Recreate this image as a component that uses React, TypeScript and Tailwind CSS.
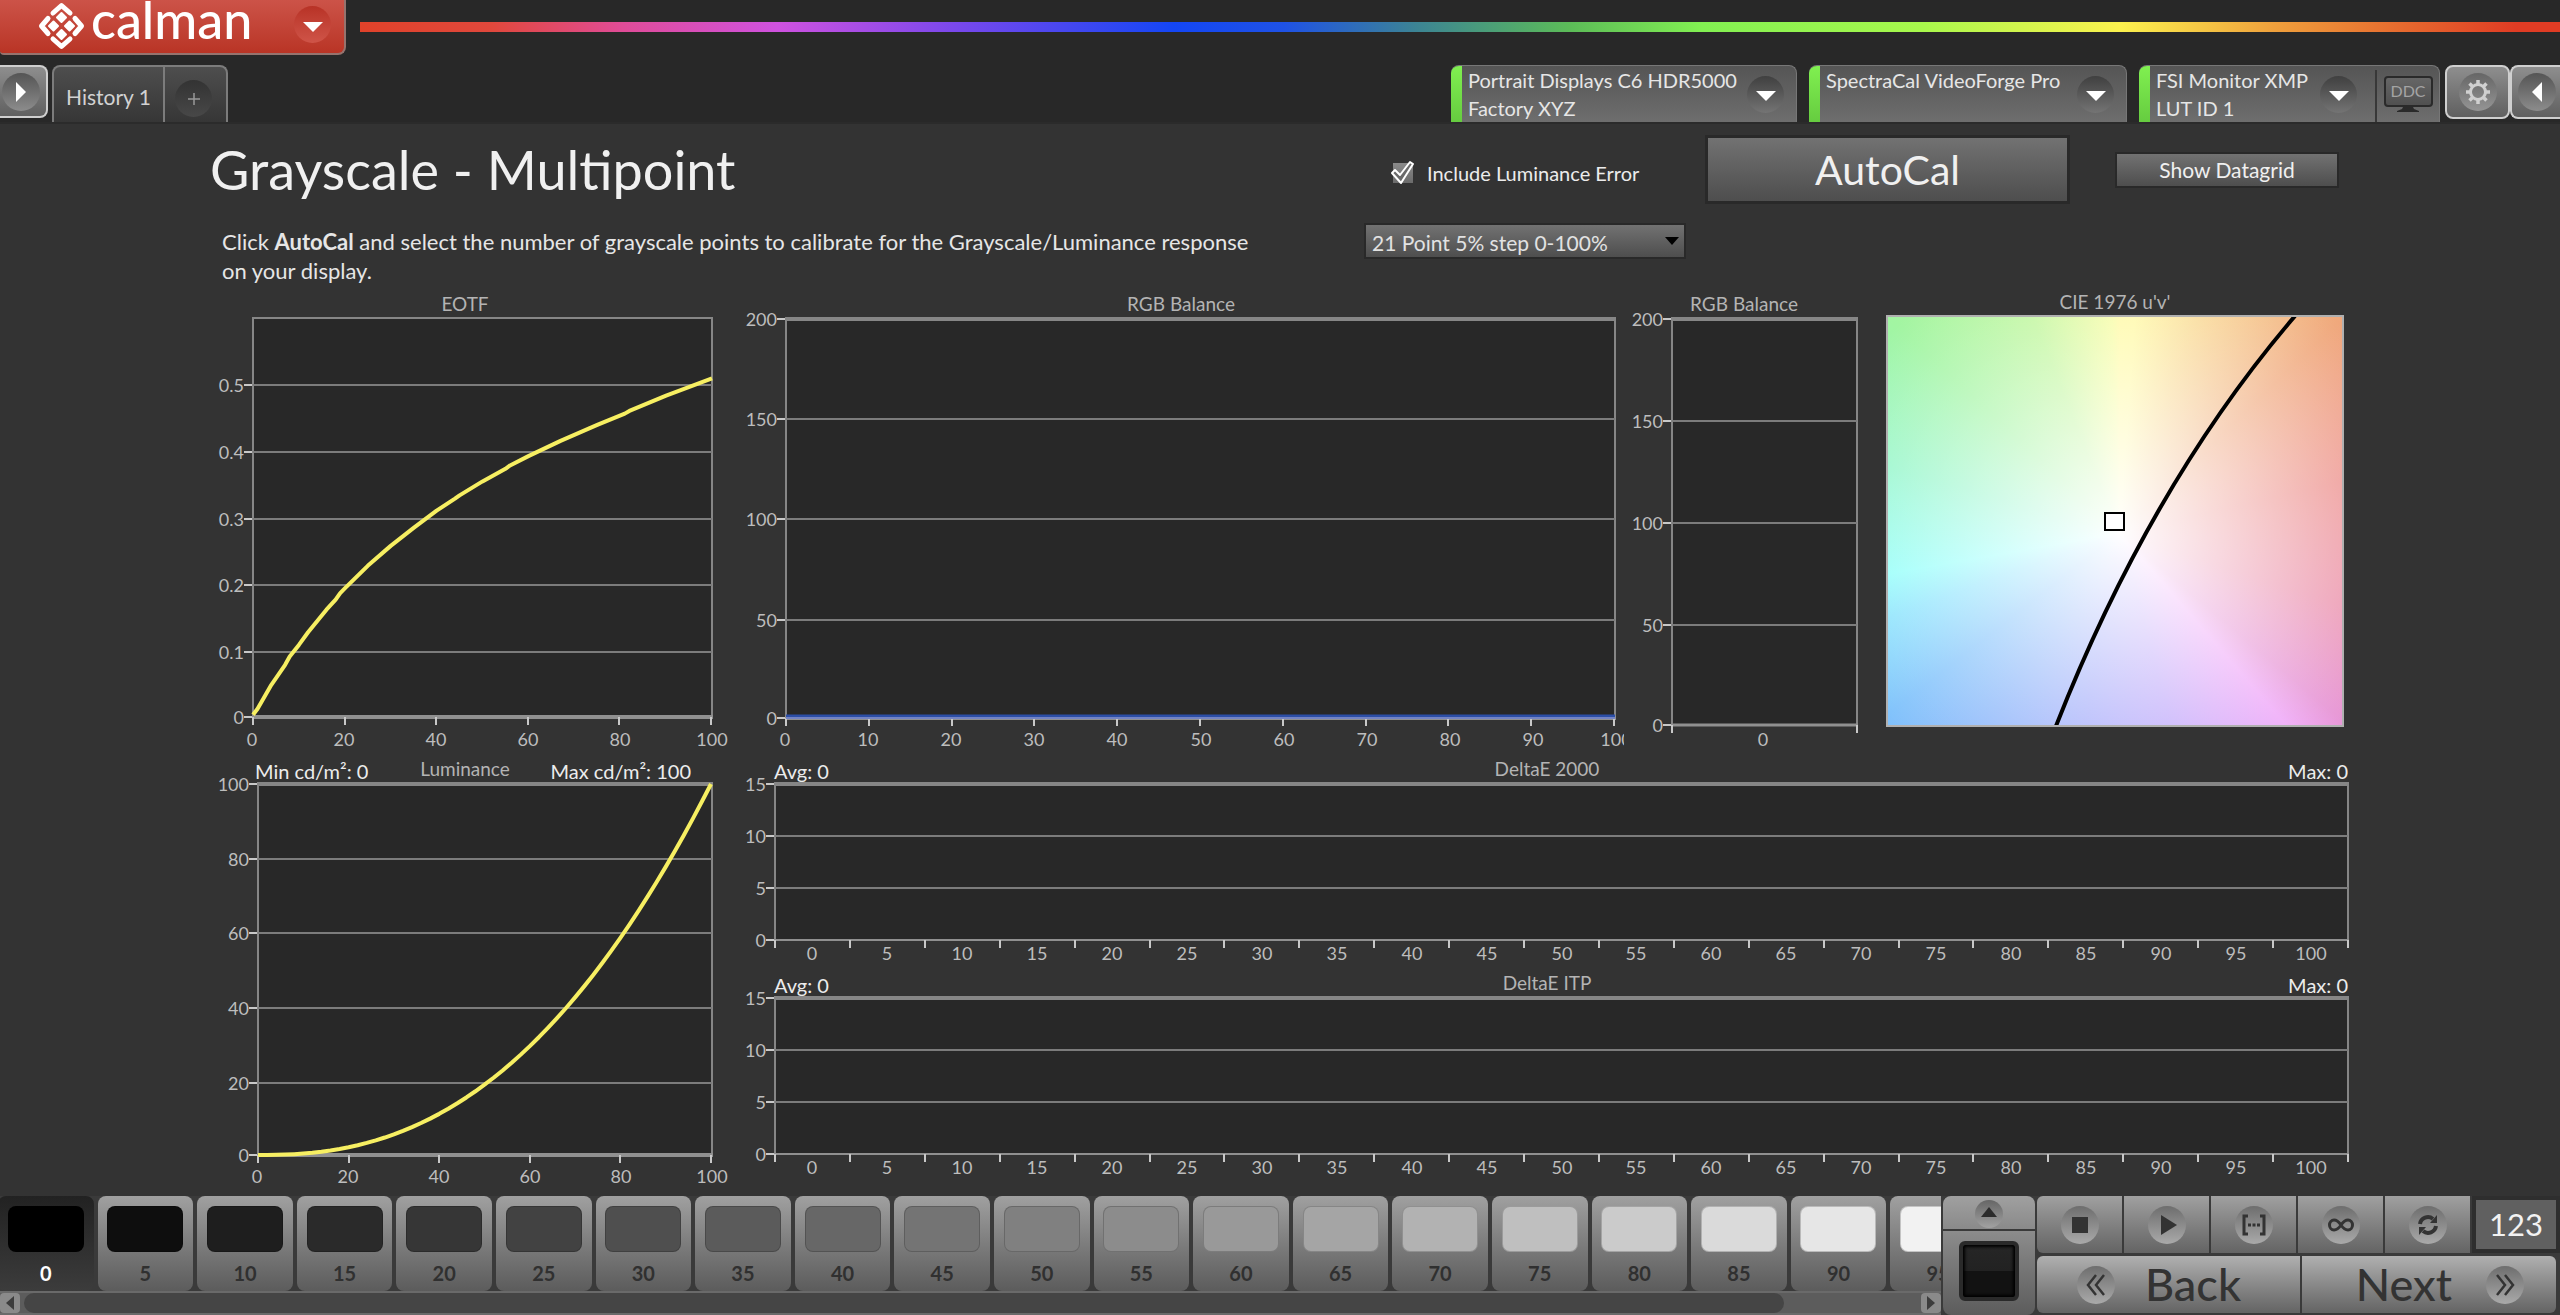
import React from "react";

const AXIS = "#bdbdbd";
const LINE = "#868686";

type Tick = { at: number; label: string };
type ChartProps = {
  view: [number, number, number, number];
  title: string;
  titleX: number;
  titleY: number;
  left: number;
  right: number;
  top: number;
  bottom: number;
  yTicks: Tick[];
  xTicks: Tick[];
  xMarks: number[];
  xBase: number;
  heavyTop?: boolean;
  base?: number;
  notes?: { x: number; y: number; text: string; end?: boolean }[];
  children?: React.ReactNode;
};

function Chart(p: ChartProps) {
  const base = p.base ?? 4;
  return (
    <svg
      viewBox={p.view.join(" ")}
      role="img"
      aria-label={p.title}
      className="block h-auto w-full overflow-hidden"
    >
      <rect x={p.left} y={p.top} width={p.right - p.left} height={p.bottom - p.top} fill="#282828" stroke={LINE} strokeWidth="2" />
      {p.yTicks.map((t) => (
        <g key={t.label}>
          <line x1={p.left - 9} x2={p.left - 1} y1={t.at} y2={t.at} stroke="#c8c8c8" strokeWidth="2" />
          {t.at > p.top + 5 && t.at < p.bottom - 5 && (
            <line x1={p.left} x2={p.right} y1={t.at} y2={t.at} stroke="#7c7c7c" strokeWidth="2" />
          )}
          <text x={p.left - 9} y={t.at + 7} textAnchor="end" fill={AXIS} fontSize="18">
            {t.label}
          </text>
        </g>
      ))}
      {p.heavyTop && <line x1={p.left - 1} x2={p.right + 1} y1={p.top} y2={p.top} stroke={LINE} strokeWidth="4" />}
      <line x1={p.left - 1} x2={p.right + 1} y1={p.bottom} y2={p.bottom} stroke="#909090" strokeWidth={base} />
      {p.xMarks.map((x) => (
        <line key={x} x1={x} x2={x} y1={p.bottom} y2={p.bottom + 8} stroke="#c8c8c8" strokeWidth="2" />
      ))}
      {p.xTicks.map((t) => (
        <text key={t.label} x={t.at} y={p.xBase} textAnchor="middle" fill={AXIS} fontSize="18">
          {t.label}
        </text>
      ))}
      <text x={p.titleX} y={p.titleY} textAnchor="middle" fill="#b4b4b4" fontSize="19">
        {p.title}
      </text>
      {p.children}
      {p.notes?.map((n) => (
        <text key={n.text} x={n.x} y={n.y} textAnchor={n.end ? "end" : "start"} fill="#ececec" fontSize="20">
          {n.text}
        </text>
      ))}
    </svg>
  );
}

const series = (from: number, to: number, count: number) =>
  Array.from({ length: count }, (_, i) => Math.round(from + ((to - from) * i) / (count - 1)));

const eotf: [number, number][] = [
  [0, 0.005], [1, 0.014], [4, 0.05], [7, 0.08], [8, 0.0925], [10, 0.11], [12, 0.129], [16, 0.163], [18, 0.178],
  [19, 0.188], [20, 0.195], [25, 0.229], [30, 0.259], [35, 0.286], [40, 0.312], [44, 0.33], [45, 0.335],
  [50, 0.356], [55, 0.375], [56, 0.38], [60, 0.394], [67, 0.417], [70, 0.426], [75, 0.441], [81, 0.458],
  [82, 0.462], [90, 0.485], [100, 0.511],
];
const eotfPoints = eotf.map(([x, y]) => `${253 + x * 4.59},${718 - y * 664.6}`).join(" ");
const lumPoints = Array.from({ length: 51 }, (_, i) => i * 2)
  .map((x) => `${258 + x * 4.53},${1155 - Math.pow(x / 100, 2.4) * 371}`)
  .join(" ");

const pctTicks = (from: number, to: number, step: number): Tick[] => {
  const n = 100 / step + 1;
  return series(from, to, n).map((at, i) => ({ at, label: String(i * step) }));
};

function DeltaE({ name, dy }: { name: string; dy: number }) {
  return (
    <Chart
      view={[732, 758 + dy, 1620, 214]}
      title={name}
      titleX={1547}
      titleY={776 + dy}
      left={775}
      right={2348}
      top={784 + dy}
      bottom={940 + dy}
      heavyTop
      base={2}
      yTicks={[784, 836, 888, 940].map((y, i) => ({ at: y + dy, label: String(15 - i * 5) }))}
      xMarks={series(775, 2348, 22)}
      xTicks={pctTicks(812, 2311, 5)}
      xBase={960 + dy}
      notes={[
        { x: 774, y: 779 + dy, text: "Avg: 0" },
        { x: 2348, y: 779 + dy, text: "Max: 0", end: true },
      ]}
    />
  );
}

function CieChart() {
  return (
    <figure className="flex flex-col pr-2 pl-4">
      <figcaption className="h-[25px] text-center text-[19px] leading-[24px] text-[#b4b4b4]">CIE 1976 u'v'</figcaption>
      <div className="relative aspect-[458/412] w-full border-2 border-[#b0b0b0] bg-[radial-gradient(farthest-corner_at_51%_53%,#fff_0%,#ffffffe6_8%,#ffffff00_96%),conic-gradient(from_0deg_at_51%_53%,#fffaa0_0deg,#fff9a0_4deg,#f9d890_20deg,#f0a87c_46deg,#ec8c88_77deg,#ea8ca8_108deg,#e692d4_130deg,#eea4f8_139deg,#bca4fa_165deg,#a0a8fa_190deg,#88b4fa_215deg,#7cc0fb_232deg,#84e2fd_250deg,#8cfffa_260deg,#90f6c8_286deg,#a2f5a2_313deg,#bef69a_338deg,#f6fca0_358deg,#fffaa0_360deg)]">
        <svg viewBox="1888 317 454 408" className="absolute inset-0 h-full w-full" preserveAspectRatio="none">
          <path d="M2295 316Q2151 484 2056 726" fill="none" stroke="#000" strokeWidth="4" />
          <rect x="2105" y="513" width="19" height="17" fill="#fff" stroke="#000" strokeWidth="2" />
        </svg>
      </div>
    </figure>
  );
}

function Knob({ children, dark }: { children: React.ReactNode; dark?: boolean }) {
  return (
    <span
      className={
        dark
          ? "grid size-[37px] shrink-0 place-items-center rounded-full bg-linear-to-b from-[#404040] to-[#747474]"
          : "grid size-[38px] shrink-0 place-items-center rounded-full bg-linear-to-b from-[#6e6e6e] to-[#aaaaaa]"
      }
    >
      {children}
    </span>
  );
}

const DownTriangle = () => (
  <svg width="20" height="12" viewBox="0 0 20 12" className="mt-1">
    <path d="M0 1H20L10 11Z" fill="#fff" />
  </svg>
);

function DeviceTab({ lines, width, children }: { lines: string[]; width: string; children?: React.ReactNode }) {
  return (
    <div className={`flex h-[57px] ${width} overflow-hidden rounded-t-[8px] border-t border-r border-[#777] bg-linear-to-b from-[#555] to-[#6e6e6e]`}>
      <div className="w-[11px] shrink-0 bg-linear-to-b from-[#80f050] to-[#66cc40]" />
      <button
        type="button"
        className={
          children
            ? "flex min-w-0 flex-1 items-center justify-between pr-[18px] pl-[6px] text-left"
            : "flex min-w-0 flex-1 items-center justify-between pr-3 pl-[6px] text-left"
        }
      >
        <span className="flex flex-col self-start text-[20px] leading-[28px] whitespace-nowrap text-[#e6e6e6]">
          {lines.map((l) => (
            <span key={l}>{l}</span>
          ))}
        </span>
        <Knob dark>
          <DownTriangle />
        </Knob>
      </button>
      {children}
    </div>
  );
}

function Header() {
  return (
    <header className="flex flex-col border-b-2 border-[#2b2b2b] bg-[#282828]">
      <div className="flex h-[55px] items-start gap-3.5">
        <div className="flex h-[55px] w-[346px] shrink-0 items-start rounded-br-[8px] rounded-bl-[4px] border-r-2 border-b-2 border-[#96736e] bg-linear-to-b from-[#cc5348] to-[#b93425] pt-[2px] pl-[38px]">
          <svg width="47" height="48" viewBox="0 0 47 48" className="shrink-0">
            <g fill="none" stroke="#fff" strokeWidth="5" strokeLinecap="round" strokeLinejoin="round">
              <path d="M15 11L23.500 3.500L32 11" />
              <path d="M15 37L23.500 44.500L32 37" />
              <path d="M10 16.500L3.500 24L10 31.500" />
              <path d="M37 16.500L43.500 24L37 31.500" />
            </g>
            <g fill="#fff" stroke="#fff" strokeWidth="2" strokeLinejoin="round">
              <path d="M23.500 11L28 15.500L23.500 20L19 15.500Z" />
              <path d="M15.500 19.500L20 24L15.500 28.500L11 24Z" />
              <path d="M31.500 19.500L36 24L31.500 28.500L27 24Z" />
              <path d="M23.500 28L28 32.500L23.500 37L19 32.500Z" />
            </g>
          </svg>
          <span className="ml-1.5 text-[52px] leading-[34px] font-medium text-white">calman</span>
          <button
            type="button"
            aria-label="Main menu"
            className="mt-1 mr-[13px] ml-auto grid size-[37px] place-items-center rounded-full bg-linear-to-b from-[#b83226] to-[#cf5448]"
          >
            <DownTriangle />
          </button>
        </div>
        <div className="mt-[22px] h-[10px] flex-1 bg-[linear-gradient(to_right,#e0422a_0%,#e0483c_6%,#e04c98_12%,#cf52e0_19%,#7a48ec_27%,#1446f4_37%,#1f52e6_42%,#3c8494_48%,#5cbc58_55%,#82f052_61%,#a8f84c_71%,#fcf24e_80%,#efa03c_87%,#e6682e_93%,#e03c24_98%)]" />
      </div>
      <div className="mt-[10px] flex h-[57px] items-start">
        <button
          type="button"
          aria-label="Expand left panel"
          className="flex h-[53px] w-[48px] items-center rounded-r-[8px] border-2 border-l-0 border-[#cfcfcf] bg-linear-to-b from-[#8e8e8e] to-[#606060] pl-[2px]"
        >
          <span className="grid size-[38px] place-items-center rounded-full bg-linear-to-b from-[#555] to-[#8c8c8c]">
            <svg width="12" height="20" viewBox="0 0 12 20">
              <path d="M1 0V20L11 10Z" fill="#fff" />
            </svg>
          </span>
        </button>
        <div className="ml-1 flex h-[57px] rounded-t-[8px] border-2 border-b-0 border-[#7c7c7c] bg-linear-to-b from-[#4e4e4e] to-[#363636]">
          <button type="button" className="w-[111px] border-r-2 border-[#7c7c7c] pt-1 text-[21px] text-[#d2d2d2]">
            History 1
          </button>
          <button type="button" aria-label="Add history" className="grid w-[61px] place-items-center pt-2 pr-1">
            <span className="grid size-[37px] place-items-center rounded-full bg-linear-to-b from-[#333] to-[#484848]">
              <svg width="14" height="14" viewBox="0 0 14 14">
                <path d="M7 1V13M1 7H13" stroke="#999" strokeWidth="1.500" />
              </svg>
            </span>
          </button>
        </div>
        <div className="ml-auto flex items-start">
          <div className="flex gap-3">
            <DeviceTab width="w-[346px]" lines={["Portrait Displays C6 HDR5000", "Factory XYZ"]} />
            <DeviceTab width="w-[318px]" lines={["SpectraCal VideoForge Pro"]} />
            <DeviceTab width="w-[301px]" lines={["FSI Monitor XMP", "LUT ID 1"]}>
              <button type="button" className="mt-1 grid w-[64px] place-items-center border-l-2 border-[#383838] pb-1">
                <span className="flex flex-col items-center">
                  <span className="grid h-[31px] w-[49px] place-items-center rounded-[4px] border-2 border-[#2a2a2a] bg-linear-to-b from-[#666] to-[#505050] text-[16px] leading-none text-[#a4a4a4]">
                    DDC
                  </span>
                  <svg width="24" height="6" viewBox="0 0 24 6">
                    <path d="M7 0H17L18 2L23 4V5H1V4L6 2Z" fill="#2a2a2a" />
                  </svg>
                </span>
              </button>
            </DeviceTab>
          </div>
          <button
            type="button"
            aria-label="Settings"
            className="ml-[5px] grid h-[54px] w-[65px] place-items-center rounded-[8px] border-2 border-[#cfcfcf] bg-linear-to-b from-[#8e8e8e] to-[#606060]"
          >
            <span className="grid size-[38px] place-items-center rounded-full bg-linear-to-b from-[#666] to-[#959595]">
              <svg width="26" height="26" viewBox="0 0 26 26">
                <circle cx="13" cy="13" r="7.500" fill="none" stroke="#d0d0d0" strokeWidth="3" />
                <g stroke="#d0d0d0" strokeWidth="3.500">
                  <path d="M13 1V5M13 21V25M1 13H5M21 13H25M4.500 4.500L7.500 7.500M18.500 18.500L21.500 21.500M4.500 21.500L7.500 18.500M18.500 7.500L21.500 4.500" />
                </g>
              </svg>
            </span>
          </button>
          <button
            type="button"
            aria-label="Expand right panel"
            className="flex h-[54px] w-[50px] items-center rounded-l-[8px] border-2 border-r-0 border-[#cfcfcf] bg-linear-to-b from-[#8e8e8e] to-[#606060] pl-1.5"
          >
            <span className="grid size-[38px] place-items-center rounded-full bg-linear-to-b from-[#555] to-[#8c8c8c]">
              <svg width="12" height="20" viewBox="0 0 12 20">
                <path d="M11 0V20L1 10Z" fill="#fff" />
              </svg>
            </span>
          </button>
        </div>
      </div>
    </header>
  );
}

function Intro() {
  return (
    <section className="flex justify-between pr-[13px]">
      <div className="flex h-[166px] flex-col pt-3.5">
        <h1 className="pl-[2px] text-[54px] leading-[64px] text-[#f0f0f0]">Grayscale - Multipoint</h1>
        <p className="mt-[25px] w-[1056px] pl-3.5 text-[22px] leading-[29px] text-[#e6e6e6]">
          Click <b>AutoCal</b> and select the number of grayscale points to calibrate for the Grayscale/Luminance response on
          your display.
        </p>
      </div>
      <div className="flex w-[975px] shrink-0 flex-col pt-[11px]">
        <div className="flex items-center">
          <label className="flex items-center gap-3 pt-1.5 pl-[26px] text-[20px] text-[#ececec]">
            <span className="relative grid size-[25px]">
              <input type="checkbox" defaultChecked className="m-[3px] size-[20px] appearance-none bg-linear-to-b from-[#8a8a8a] to-[#6c6c6c]" />
              <svg viewBox="0 0 25 25" className="pointer-events-none absolute inset-0">
                <path d="M2 13L5 10L10 15L20 2L23 4L11 23Z" fill="#6a6a6a" stroke="#fff" strokeWidth="2" strokeLinejoin="round" />
              </svg>
            </span>
            Include Luminance Error
          </label>
          <button
            type="button"
            className="ml-auto h-[69px] w-[365px] border-3 border-[#292929] bg-linear-to-b from-[#727272] to-[#4e4e4e] text-[41px] leading-none text-[#f0f0f0]"
          >
            AutoCal
          </button>
          <button
            type="button"
            className="ml-[45px] h-[36px] w-[224px] border-2 border-[#292929] bg-linear-to-b from-[#727272] to-[#4e4e4e] text-[21px] leading-none text-[#f0f0f0]"
          >
            Show Datagrid
          </button>
        </div>
        <div className="relative mt-[19px] w-[322px]">
          <select
            aria-label="Grayscale points"
            className="h-[36px] w-full appearance-none border-2 border-[#292929] bg-linear-to-b from-[#727272] to-[#4e4e4e] pt-1 pl-1.5 text-[21px] leading-[28px] text-[#e2e2e2]"
          >
            <option>21 Point 5% step 0-100%</option>
          </select>
          <svg width="14" height="9" viewBox="0 0 14 9" className="pointer-events-none absolute top-[14px] right-[7px]">
            <path d="M0 0H14L7 8Z" fill="#000" />
          </svg>
        </div>
      </div>
    </section>
  );
}

function Charts() {
  const rgbY = [319, 419, 519, 620, 718];
  const smallY = [319, 421, 523, 625, 725];
  const labels = ["200", "150", "100", "50", "0"];
  return (
    <>
      <section className="grid grid-cols-[524fr_892fr_246fr_482fr]">
        <Chart
          view={[208, 290, 524, 468]}
          title="EOTF"
          titleX={465}
          titleY={311}
          left={253}
          right={712}
          top={318}
          bottom={717}
          yTicks={[385, 452, 519, 585, 652, 717].map((at, i) => ({ at, label: i === 5 ? "0" : `0.${5 - i}` }))}
          xMarks={series(253, 711, 6)}
          xTicks={pctTicks(252, 712, 20)}
          xBase={746}
        >
          <polyline points={eotfPoints} fill="none" stroke="#f7ef62" strokeWidth="4" strokeLinejoin="round" />
        </Chart>
        <Chart
          view={[732, 290, 892, 468]}
          title="RGB Balance"
          titleX={1181}
          titleY={311}
          left={786}
          right={1615}
          top={319}
          bottom={718}
          heavyTop
          yTicks={rgbY.map((at, i) => ({ at, label: labels[i] }))}
          xMarks={series(786, 1614, 11)}
          xTicks={pctTicks(785, 1616, 10)}
          xBase={746}
        >
          <line x1="786" x2="1615" y1="716" y2="716" stroke="#2c4fa8" strokeWidth="3" />
          <line x1="786" x2="1615" y1="718" y2="718" stroke="#7484c4" strokeWidth="2" />
        </Chart>
        <Chart
          view={[1624, 290, 246, 468]}
          title="RGB Balance"
          titleX={1744}
          titleY={311}
          left={1672}
          right={1857}
          top={319}
          bottom={725}
          heavyTop
          base={3}
          yTicks={smallY.map((at, i) => ({ at, label: labels[i] }))}
          xMarks={[1672, 1857]}
          xTicks={[{ at: 1763, label: "0" }]}
          xBase={746}
        />
        <CieChart />
      </section>
      <section className="grid grid-cols-[524fr_1620fr]">
        <Chart
          view={[208, 758, 524, 432]}
          title="Luminance"
          titleX={465}
          titleY={776}
          left={258}
          right={712}
          top={784}
          bottom={1155}
          heavyTop
          yTicks={[784, 859, 933, 1008, 1083, 1155].map((at, i) => ({ at, label: String(100 - i * 20) }))}
          xMarks={series(258, 711, 6)}
          xTicks={pctTicks(257, 712, 20)}
          xBase={1183}
          notes={[
            { x: 255, y: 779, text: "Min cd/m²: 0" },
            { x: 691, y: 779, text: "Max cd/m²: 100", end: true },
          ]}
        >
          <polyline points={lumPoints} fill="none" stroke="#f7ef62" strokeWidth="4" strokeLinejoin="round" />
        </Chart>
        <div className="flex flex-col">
          <DeltaE name="DeltaE 2000" dy={0} />
          <DeltaE name="DeltaE ITP" dy={214} />
        </div>
      </section>
    </>
  );
}

const patches = [
  "#000000", "#0e0e0e", "#1e1e1e", "#2a2a2a", "#363636", "#424242", "#4f4f4f", "#5b5b5b", "#676767", "#747474",
  "#808080", "#8c8c8c", "#999999", "#a5a5a5", "#b2b2b2", "#bfbfbf", "#cbcbcb", "#dadada", "#e6e6e6", "#f2f2f2",
];

function PatchStrip() {
  return (
    <div className="flex min-w-0 flex-1 flex-col">
      <div className="-ml-0.5 flex h-[95px] gap-1 overflow-hidden bg-[#3a3a3a]">
        {patches.map((color, i) => (
          <button
            key={color}
            type="button"
            className={
              i === 0
                ? "flex w-[4.92%] shrink-0 flex-col items-center rounded-[8px] bg-linear-to-b from-[#222] to-[#3c3c3c] pt-[10px] text-[20px] font-bold text-white"
                : "flex w-[4.92%] shrink-0 flex-col items-center rounded-[8px] bg-linear-to-b from-[#a0a0a0] to-[#5c5c5c] pt-[10px] text-[20px] font-bold text-[#303030]"
            }
          >
            <span
              className="h-[46px] w-[76px] rounded-[8px] border border-[#00000030]"
              style={{ backgroundColor: color }}
            />
            <span className="mt-[9px] leading-6">{i * 5}</span>
          </button>
        ))}
      </div>
      <div className="flex h-[24px] items-center border-y-2 border-[#6a6a6a] bg-[#5c5c5c]">
        <button type="button" aria-label="Scroll left" className="grid h-[20px] w-[20px] place-items-center rounded-[4px] bg-[#8a8a8a]">
          <svg width="8" height="14" viewBox="0 0 8 14">
            <path d="M8 0V14L0 7Z" fill="#3c3c3c" />
          </svg>
        </button>
        <div className="flex h-[20px] flex-1 px-1">
          <div className="h-full w-[93%] rounded-full bg-[#454545]" />
        </div>
        <button type="button" aria-label="Scroll right" className="grid h-[20px] w-[20px] place-items-center rounded-[4px] bg-[#8a8a8a]">
          <svg width="8" height="14" viewBox="0 0 8 14">
            <path d="M0 0V14L8 7Z" fill="#3c3c3c" />
          </svg>
        </button>
      </div>
    </div>
  );
}

const transport: { label: string; icon: React.ReactNode }[] = [
  { label: "Stop", icon: <rect x="5" y="5" width="16" height="16" fill="#333" /> },
  { label: "Play", icon: <path d="M7 3V23L23 13Z" fill="#333" /> },
  {
    label: "Read range",
    icon: (
      <g fill="none" stroke="#333" strokeWidth="3">
        <path d="M7 4H3V22H7M19 4H23V22H19" />
        <path d="M7 13H19" strokeDasharray="3 1.500" />
      </g>
    ),
  },
  {
    label: "Continuous",
    icon: (
      <path d="M13 13C10 8.500 8 8 6 8A4.500 5 0 0 0 6 18C8 18 10 17.500 13 13C16 8.500 18 8 20 8A4.500 5 0 0 1 20 18C18 18 16 17.500 13 13Z" fill="none" stroke="#333" strokeWidth="3" />
    ),
  },
  {
    label: "Refresh",
    icon: (
      <g fill="none" stroke="#333" strokeWidth="4">
        <path d="M5 12A8 8 0 0 1 18 7" />
        <path d="M21 14A8 8 0 0 1 8 19" />
        <path d="M15 11H22V3ZM11 15H4V23Z" fill="#333" stroke="none" />
      </g>
    ),
  },
];

function Footer() {
  return (
    <footer className="mt-auto flex h-[119px] bg-[#3a3a3a]">
      <PatchStrip />
      <div className="ml-[2px] flex w-[92px] shrink-0 flex-col">
        <button type="button" aria-label="Show pattern window" className="flex h-[35px] justify-center rounded-t-[8px] border-b-2 border-[#3a3a3a] bg-linear-to-b from-[#a0a0a0] to-[#8a8a8a] pt-1">
          <span className="grid size-[28px] place-items-center rounded-full bg-linear-to-b from-[#666] to-[#a2a2a2]">
            <svg width="16" height="10" viewBox="0 0 16 10" className="mb-1">
              <path d="M0 10H16L8 0Z" fill="#2c2c2c" />
            </svg>
          </span>
        </button>
        <div className="grid flex-1 place-items-center rounded-b-[8px] bg-linear-to-b from-[#8c8c8c] to-[#5c5c5c] pb-1">
          <div className="size-[60px] rounded-[6px] border-4 border-[#2a2a2a] bg-[linear-gradient(to_bottom,#262626_0%,#222_50%,#121212_50%,#121212_100%)] inset-shadow-[0_0_3px_2px_#000]" />
        </div>
      </div>
      <div className="ml-[2px] flex w-[523px] shrink-0 flex-col gap-[3px]">
        <div className="flex h-[57px] gap-[2px]">
          {transport.map((t) => (
            <button
              key={t.label}
              type="button"
              aria-label={t.label}
              className="grid flex-1 place-items-center bg-linear-to-b from-[#a0a0a0] to-[#646464] first:rounded-l-[6px]"
            >
              <Knob>
                <svg width="26" height="26" viewBox="0 0 26 26">
                  {t.icon}
                </svg>
              </Knob>
            </button>
          ))}
          <output className="grid w-[88px] place-items-center border-4 border-[#2e2e2e] bg-[#606060] text-[31px] leading-none text-[#f2f2f2]">
            123
          </output>
        </div>
        <div className="flex h-[57px] gap-[2px] pr-1 text-[45px] leading-none font-medium text-[#333]">
          <button type="button" className="flex flex-1 items-center rounded-l-[6px] bg-linear-to-b from-[#b0b0b0] to-[#646464] pl-[40px]">
            <Knob>
              <svg width="22" height="22" viewBox="0 0 22 22">
                <path d="M11 1L3 11L11 21M19 1L11 11L19 21" fill="none" stroke="#333" strokeWidth="2.500" />
              </svg>
            </Knob>
            <span className="ml-[30px]">Back</span>
          </button>
          <button type="button" className="flex flex-1 items-center justify-end rounded-r-[6px] bg-linear-to-b from-[#b0b0b0] to-[#646464] pr-[32px]">
            <span className="mr-[34px]">Next</span>
            <Knob>
              <svg width="22" height="22" viewBox="0 0 22 22">
                <path d="M3 1L11 11L3 21M11 1L19 11L11 21" fill="none" stroke="#333" strokeWidth="2.500" />
              </svg>
            </Knob>
          </button>
        </div>
      </div>
    </footer>
  );
}

export default function App() {
  return (
    <div className="flex min-h-screen flex-col bg-[#333] font-['Lato','Noto_Sans',sans-serif]">
      <Header />
      <main className="flex flex-col px-[208px]">
        <Intro />
        <Charts />
      </main>
      <Footer />
    </div>
  );
}
